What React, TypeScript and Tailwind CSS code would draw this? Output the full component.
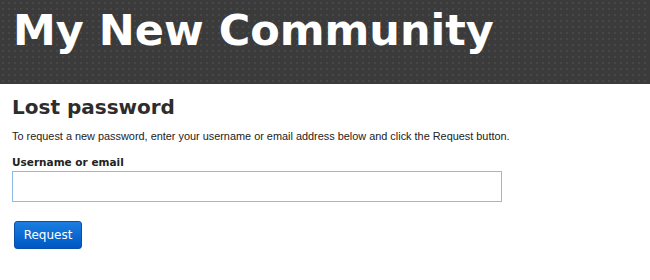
export default function App() {
  return (
    <div className="w-[650px] h-[280px] bg-white font-['DejaVu_Sans',sans-serif] text-[#333]">
      <header className="h-[84px] bg-[#3b3b3b] bg-[radial-gradient(#474747_1px,transparent_1px)] bg-[length:6px_6px] px-[13px] pt-[1px]">
        <h1 className="text-[43px] leading-[58px] font-bold text-white">My New Community</h1>
      </header>

      <main className="px-[12px] pt-[10px]">
        <h2 className="text-[20px] leading-[26px] font-bold text-[#2d2d2d]">Lost password</h2>
        <p className="mt-[9px] font-['Liberation_Sans',sans-serif] text-[10.9px] leading-[14px] text-[#222]">
          To request a new password, enter your username or email address below and click the Request button.
        </p>

        <label className="block mt-[13px] text-[10.5px] leading-[13px] font-bold text-[#222]">Username or email</label>
        <input
          type="text"
          className="block mt-[2px] w-[490px] h-[31px] border border-[#8dbbe3] bg-white outline-none"
        />

        <button className="mt-[19px] ml-[2px] w-[68px] h-[28px] rounded-[3px] border border-[#0a4fa8] bg-gradient-to-b from-[#1b7ee0] to-[#0056c4] text-white text-[12px]">
          Request
        </button>
      </main>
    </div>
  );
}
